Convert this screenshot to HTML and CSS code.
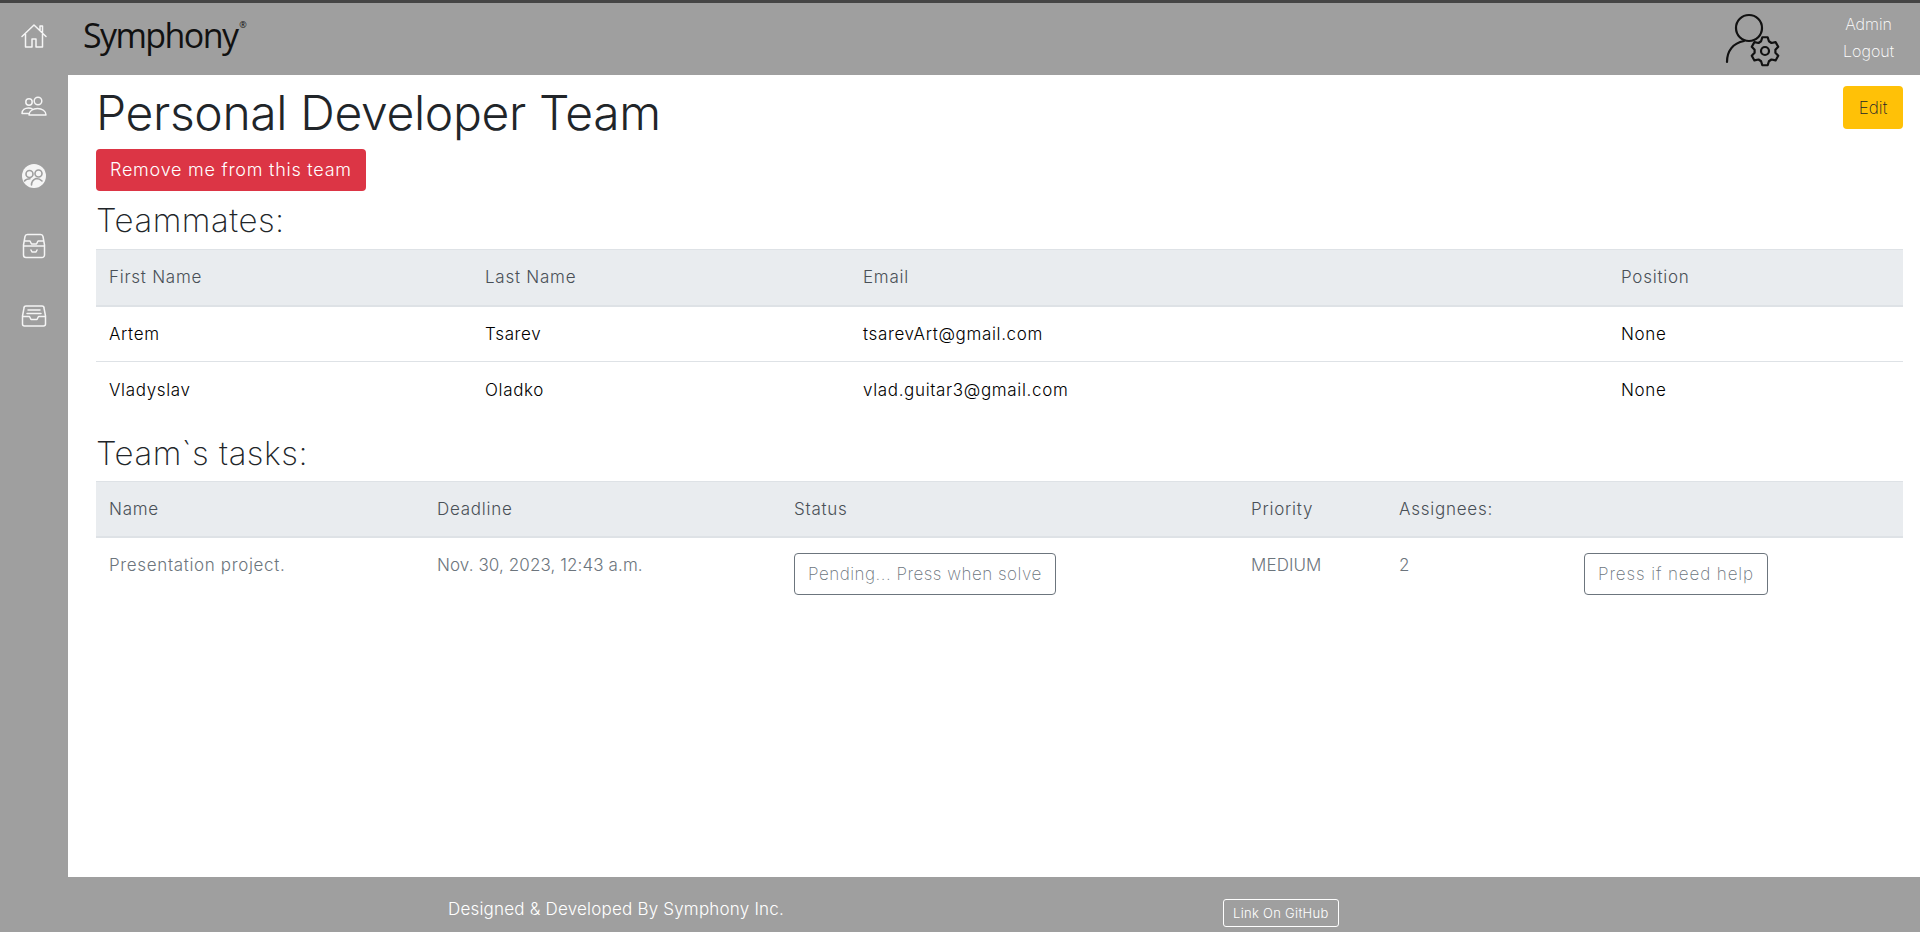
FILE: index.html
```html
<!DOCTYPE html>
<html lang="en">
<head>
    <meta charset="UTF-8">
    <title>Personal Developer Team</title>
    <link rel="stylesheet" href="styles.css">
</head>
<body>
    <nav class="sidebar">
        <a class="side-link" href="#">
            <svg class="side-icon" viewBox="0 0 26 26"><path d="M1 13.500 13 2l12 11.500M19 7V3h2.500v6.500M4.500 11v13h6.500v-8h4v8h6.500V11"/></svg>
        </a>
        <a class="side-link" href="#">
            <svg class="side-icon" viewBox="0 0 26 26"><circle cx="8" cy="9" r="3.200"/><circle cx="17" cy="8" r="3.800"/><path d="M1 20.500c0-3.500 3-5.500 6.500-5.500 1.200 0 2.500.2 3.500.7M1 20.500h6.500M8 22c0-4 4-6.500 8.500-6.500S25 18 25 22z"/></svg>
        </a>
        <a class="side-link" href="#">
            <svg class="side-icon side-icon-solid" viewBox="0 0 26 26">
                <circle cx="13" cy="13" r="12"/>
                <circle class="face-line" cx="8.500" cy="11" r="3.500"/>
                <circle class="face-line" cx="17.500" cy="10.500" r="3.500"/>
                <path class="face-line" d="M3.500 18c1-1.500 3-2.200 5.500-2.200M10.500 22c0-3 2-5.500 4.500-6.500 2.500 0 4.500.8 6 2.500"/>
            </svg>
        </a>
        <a class="side-link" href="#">
            <svg class="side-icon" viewBox="0 0 26 26"><path d="M2.500 12 4 3.500A2.500 2.500 0 0 1 6.500 1.500h13A2.500 2.500 0 0 1 22 3.500L23.500 12v10a2.500 2.500 0 0 1-2.500 2.500H5A2.500 2.500 0 0 1 2.500 22zM2.500 13h21M4 8h5l1.500 3h5L17 8h5M10 17l1 2h4l1-2"/></svg>
        </a>
        <a class="side-link" href="#">
            <svg class="side-icon" viewBox="0 0 26 26"><path d="M5 3h16a2 2 0 0 1 2 2l1.500 8v8a2 2 0 0 1-2 2h-19a2 2 0 0 1-2-2v-8L3 5a2 2 0 0 1 2-2zM1.500 13.500h7l1.500 3h6l1.500-3h7M7 7h12M6 10.500h14"/></svg>
        </a>
    </nav>

    <header class="topbar">
        <a class="brand" href="#">Symphony<sup class="brand-mark">®</sup></a>
        <div class="account">
            <svg class="account-icon" viewBox="0 0 62 56">
                <circle cx="28" cy="17" r="13"/>
                <path d="M6 51c0-11 6-19 17-21"/>
                <path d="M40.070 30.260 41.330 26.260h5.340l1.260 4 2.530 1.730 4.110-.91 2.670 4.620-2.840 3.100v2.920l2.840 3.100-2.670 4.620-4.110-.91-2.530 1.730-1.260 4h-5.340l-1.260-4-2.530-1.730-4.110.91-2.670-4.620 2.840-3.100v-2.920l-2.840-3.100 2.670-4.620 4.110.91z"/>
                <circle cx="44" cy="40" r="4"/>
            </svg>
            <div class="account-links">
                <a href="#">Admin</a>
                <a href="#">Logout</a>
            </div>
        </div>
    </header>

    <main class="content">
        <div class="title-row">
            <div>
                <h1 class="team-title">Personal Developer Team</h1>
                <button class="btn btn-danger">Remove me from this team</button>
            </div>
            <button class="btn btn-warning">Edit</button>
        </div>

        <h3 class="section-title">Teammates:</h3>
        <table class="table">
            <colgroup>
                <col style="width: 376px">
                <col style="width: 378px">
                <col style="width: 758px">
                <col>
            </colgroup>
            <thead>
                <tr><th>First Name</th><th>Last Name</th><th>Email</th><th>Position</th></tr>
            </thead>
            <tbody>
                <tr><td>Artem</td><td>Tsarev</td><td>tsarevArt@gmail.com</td><td>None</td></tr>
                <tr><td>Vladyslav</td><td>Oladko</td><td>vlad.guitar3@gmail.com</td><td>None</td></tr>
            </tbody>
        </table>

        <h3 class="section-title section-title-tasks">Team`s tasks:</h3>
        <table class="table table-tasks">
            <colgroup>
                <col style="width: 328px">
                <col style="width: 357px">
                <col style="width: 457px">
                <col style="width: 148px">
                <col style="width: 185px">
                <col>
            </colgroup>
            <thead>
                <tr><th>Name</th><th>Deadline</th><th>Status</th><th>Priority</th><th>Assignees:</th><th></th></tr>
            </thead>
            <tbody>
                <tr>
                    <td>Presentation project.</td>
                    <td class="cell-date">Nov. 30, 2023, 12:43 a.m.</td>
                    <td><button class="btn btn-outline">Pending... Press when solve</button></td>
                    <td class="cell-date">MEDIUM</td>
                    <td>2</td>
                    <td><button class="btn btn-outline btn-help">Press if need help</button></td>
                </tr>
            </tbody>
        </table>
    </main>

    <footer class="footer">
        <span class="footer-text">Designed &amp; Developed By Symphony Inc.</span>
        <a class="footer-link" href="#">Link On GitHub</a>
    </footer>
</body>
</html>
```

FILE: styles.css
```css
* {
    box-sizing: border-box;
}

html, body {
    height: 100%;
}

body {
    display: grid;
    grid-template-columns: 68px 1fr;
    grid-template-rows: 72px 1fr 55px;
    margin: 0;
    background-color: #9f9f9f;
    border-top: 3px solid #454545;
    font-family: "Inter", "Liberation Sans", sans-serif;
    font-weight: 300;
    font-size: 16px;
    color: #212529;
}

a {
    text-decoration: none;
    color: inherit;
}

.sidebar {
    grid-column: 1;
    grid-row: 1 / 3;
    display: flex;
    flex-direction: column;
    margin-top: -2px;
}

.side-link {
    display: flex;
    justify-content: center;
    align-items: center;
    height: 70px;
}

.side-icon {
    width: 26px;
    height: 26px;
    fill: none;
    stroke: #fff;
    stroke-width: 1.500;
    stroke-linejoin: round;
    stroke-linecap: round;
    opacity: 0.9;
}

.side-icon-solid {
    fill: #fff;
    stroke: none;
}

.face-line {
    fill: none;
    stroke: #9f9f9f;
    stroke-width: 1.600;
}

.topbar {
    grid-column: 2;
    grid-row: 1;
    display: flex;
    justify-content: space-between;
    align-items: center;
    padding-left: 15px;
    padding-right: 26px;
}

.brand {
    font-family: "Open Sans", sans-serif;
    font-size: 34px;
    font-weight: 400;
    letter-spacing: -1.600px;
    color: #111;
    line-height: 1;
    margin-top: -8px;
}

.brand-mark {
    font-size: 9px;
    letter-spacing: 0;
    vertical-align: 20px;
    line-height: 0;
    margin-left: 2px;
}

.account {
    display: flex;
    align-items: center;
}

.account-icon {
    width: 62px;
    height: 56px;
    fill: none;
    stroke: #111;
    stroke-width: 2.200;
    stroke-linecap: round;
    stroke-linejoin: round;
    margin-right: 60px;
}

.account-links {
    display: flex;
    flex-direction: column;
    align-items: center;
    gap: 5px;
    color: #fff;
    font-size: 16px;
    font-weight: 200;
    line-height: 22px;
    margin-top: -3px;
}

.content {
    grid-column: 2;
    grid-row: 2;
    background-color: #fff;
    padding: 10px 17px 0 28px;
}

.title-row {
    display: flex;
    justify-content: space-between;
    align-items: flex-start;
}

.team-title {
    margin: 0 0 9px;
    font-size: 48px;
    font-weight: 300;
    line-height: 55px;
    letter-spacing: -0.350px;
}

.btn {
    display: inline-block;
    border: 1px solid transparent;
    border-radius: 4px;
    font-family: inherit;
    font-weight: 300;
    font-size: 17px;
    line-height: 26px;
    padding: 7px 13px;
    background: none;
}

.btn-danger {
    background-color: #dc3545;
    color: #fff;
    font-size: 18px;
    letter-spacing: 0.750px;
}

.btn-warning {
    background-color: #ffc107;
    color: #212529;
    font-weight: 200;
    width: 60px;
    height: 43px;
    padding: 0;
    margin-top: 1px;
}

.btn-outline {
    border-color: #6c757d;
    color: #6c757d;
    letter-spacing: 0.500px;
    font-weight: 200;
    vertical-align: top;
    white-space: nowrap;
}

.btn-help {
    letter-spacing: 0.900px;
}

.section-title {
    margin: 12px 0 12px;
    font-size: 33px;
    font-weight: 200;
    line-height: 34px;
    letter-spacing: 0.500px;
}

.section-title-tasks {
    margin-top: 18px;
    margin-bottom: 11px;
}

.table {
    width: 100%;
    border-collapse: collapse;
    table-layout: fixed;
    font-size: 17px;
    letter-spacing: 0.650px;
}

.table th {
    background-color: #e9ecef;
    color: #495057;
    font-weight: 300;
    letter-spacing: 0.750px;
    text-align: left;
    height: 56px;
    padding: 0 13px;
    border-top: 1px solid #dee2e6;
    border-bottom: 2px solid #dee2e6;
}

.table td {
    height: 56px;
    padding: 0 13px;
    border-bottom: 1px solid #dee2e6;
    font-weight: 300;
    color: #000;
}

.table tbody tr:last-child td {
    border-bottom: none;
}

.table-tasks td {
    color: #6c757d;
    vertical-align: top;
    padding-top: 15px;
    line-height: 24px;
}

.table-tasks .cell-date {
    letter-spacing: 0.100px;
}

.footer {
    grid-column: 2;
    grid-row: 3;
    display: flex;
    align-items: center;
    color: #fff;
    padding-left: 380px;
    font-size: 17px;
    letter-spacing: 0.200px;
}

.footer-text {
    width: 775px;
    margin-top: 8px;
}

.footer-link {
    border: 1px solid #fff;
    border-radius: 3px;
    font-size: 13px;
    letter-spacing: 0.300px;
    line-height: 26px;
    padding: 0 9px;
    margin-top: 17px;
}
```
